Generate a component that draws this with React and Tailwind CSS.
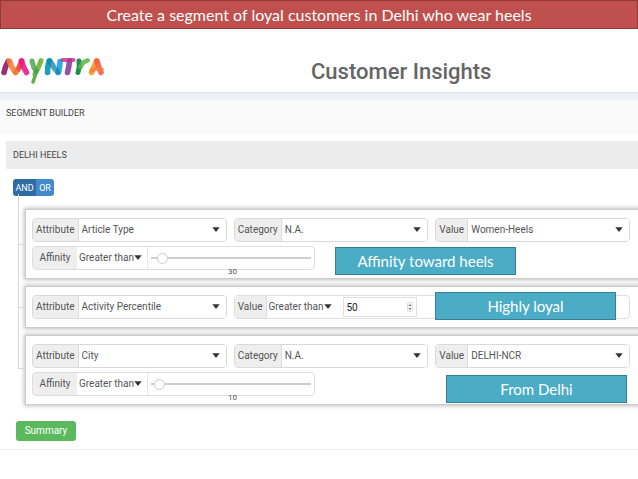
import { useState } from 'react'

function Logo() {
  return (
    <svg viewBox="0 0 106 32" className="w-[106px] h-8 shrink-0" role="img" aria-label="Myntra">
      <g fill="none" strokeLinecap="round" strokeWidth="5.600">
        <path d="M4 18.500 Q5 13 8 7.500" stroke="#9c2f72" />
        <path d="M15.500 18 Q20 14 21.500 7" stroke="#f0503f" />
        <path d="M9.500 7 Q11 13 15.500 18.500" stroke="#f58233" opacity=".88" />
        <path d="M21.500 7 Q23 13 26.500 18.500" stroke="#e8168b" opacity=".88" />
        <path d="M41 6.500 Q38.500 14 35 20" stroke="#7dbb42" strokeWidth="5" />
        <path d="M36 18 Q35 23 33 28" stroke="#5fb048" strokeWidth="3.500" />
        <path d="M32 7 Q33 13 36 17" stroke="#3fa04c" strokeWidth="5" opacity=".8" />
        <path d="M47.500 18.500 Q47.500 12 49 7" stroke="#1aa0b8" />
        <path d="M60 7.500 Q60 13 58.500 18.500" stroke="#29b0e8" />
        <path d="M50 7 Q53 13 57.500 18" stroke="#147fae" opacity=".75" />
        <path d="M69.500 7 Q69 13 67.500 18.500" stroke="#9a4fa8" />
        <path d="M62.500 6 H73.500" stroke="#c02c94" strokeWidth="4.200" opacity=".8" />
        <path d="M79 7 Q80 13 78 18.500" stroke="#1f8d4d" strokeWidth="5" />
        <path d="M80.500 13 Q82 8 87.500 6.500" stroke="#62b246" strokeWidth="4.800" opacity=".85" />
        <path d="M91.500 18.500 Q94 13 96.500 7" stroke="#fba23a" />
        <path d="M97 7 Q98.500 13 101 18.500" stroke="#ef5b42" opacity=".85" />
        <path d="M91.500 16.500 Q96 14 102 15.500" stroke="#f47a35" strokeWidth="3.800" opacity=".75" />
      </g>
    </svg>
  )
}

function Caret({ className }) {
  return (
    <svg viewBox="0 0 8 5" className={`pointer-events-none absolute top-1/2 -mt-[3px] w-2 h-[5px] ${className}`}>
      <path d="M0.300 0.200 H7.700 L4 5 Z" fill="#333" />
    </svg>
  )
}

function FieldLabel({ htmlFor, children }) {
  return (
    <label
      htmlFor={htmlFor}
      className="flex items-center shrink-0 px-[3px] bg-[#eeeeee] border-r border-[#dcdcdc]"
    >
      {children}
    </label>
  )
}

function SelectField({ id, label, value }) {
  return (
    <div className="flex h-6 border border-[#d9d9d9] rounded-sm overflow-hidden">
      <FieldLabel htmlFor={id}>{label}</FieldLabel>
      <div className="relative grow">
        <select id={id} className="appearance-none w-full h-full pl-[3px] pr-5 bg-white outline-none">
          <option>{value}</option>
        </select>
        <Caret className="right-[6px]" />
      </div>
    </div>
  )
}

function OperatorSelect({ id }) {
  return (
    <div className="relative w-[70px] shrink-0">
      <select
        id={id}
        aria-label="Operator"
        className="appearance-none w-full h-full pl-[2px] bg-white outline-none"
      >
        <option>Greater than</option>
        <option>Less than</option>
      </select>
      <Caret className="right-[5px]" />
    </div>
  )
}

function AffinityField({ id, amount, position }) {
  const [pos, setPos] = useState(position)

  return (
    <div className="relative flex w-[283px] h-6 border border-[#dedede] rounded-sm">
      <label
        htmlFor={id}
        className="flex items-center justify-center shrink-0 w-11 bg-[#eeeeee] rounded-l-sm"
      >
        Affinity
      </label>
      <OperatorSelect id={`${id}-operator`} />
      <div className="flex items-center grow px-[3px] border-l border-[#e8e8e8]">
        <input
          id={id}
          type="range"
          min="0"
          max="100"
          value={pos}
          onChange={(e) => setPos(e.target.value)}
          className="appearance-none w-full h-3 bg-transparent [&::-webkit-slider-runnable-track]:h-[2px] [&::-webkit-slider-runnable-track]:bg-[#cfcfcf] [&::-webkit-slider-thumb]:appearance-none [&::-webkit-slider-thumb]:-mt-1 [&::-webkit-slider-thumb]:size-[11px] [&::-webkit-slider-thumb]:rounded-full [&::-webkit-slider-thumb]:border [&::-webkit-slider-thumb]:border-[#cccccc] [&::-webkit-slider-thumb]:bg-white"
        />
      </div>
      <output htmlFor={id} className="absolute top-5 right-[77px] text-[8px] leading-[10px]">
        {amount}
      </output>
    </div>
  )
}

function NumberField({ id, label, value }) {
  return (
    <div className="col-span-2 flex h-6 border border-[#dedede] rounded-sm">
      <FieldLabel htmlFor={id}>{label}</FieldLabel>
      <OperatorSelect id={`${id}-operator`} />
      <div className="relative ml-[6px] my-px w-[74px]">
        <input
          id={id}
          type="number"
          defaultValue={value}
          className="w-full h-full pl-[3px] border border-[#e0e0e0] text-[#222] outline-none [&::-webkit-inner-spin-button]:appearance-none"
        />
        <svg viewBox="0 0 6 10" className="pointer-events-none absolute right-1 top-[5px] w-[6px] h-[10px]">
          <rect x="0.500" y="0.500" width="5" height="9" rx="1" fill="#f5f5f5" stroke="#dddddd" />
          <path d="M1.500 4 L3 2 L4.500 4 Z M1.500 6 L3 8 L4.500 6 Z" fill="#777" />
        </svg>
      </div>
    </div>
  )
}

// A rule card, joined to the tree line on its left
function RuleCard({ last, children }) {
  return (
    <div className="relative ml-[7px] -mr-1 py-2 pl-[6px] pr-[11px] bg-white border border-[#cccccc] shadow-[0_0_4px_1px_rgba(0,0,0,0.25)]">
      {!last && <span className="absolute -left-2 -top-4 -bottom-2 w-px bg-[#d8d8d8]" />}
      {last && <span className="absolute -left-2 -top-4 h-12 w-px bg-[#d8d8d8]" />}
      <span className={`absolute -left-2 w-[7px] h-px bg-[#d8d8d8] ${last ? 'top-8' : 'top-1/2'}`} />
      {children}
    </div>
  )
}

function Callout({ className, children }) {
  return (
    <div
      className={`absolute flex items-center justify-center w-[181px] h-7 bg-[#4bacc6] border border-[#397f93] font-[Lato,sans-serif] text-[15px] text-white ${className}`}
    >
      {children}
    </div>
  )
}

export default function App() {
  return (
    <div className="min-h-screen bg-white font-[Roboto,sans-serif] text-[10px] leading-4 text-[#555] overflow-x-hidden">
      <h1 className="flex items-center justify-center h-[29px] bg-[#c0504d] border border-[#8f3a38] font-[Lato,sans-serif] text-base text-white">
        Create a segment of loyal customers in Delhi who wear heels
      </h1>

      <header className="flex h-16 pt-[25px] border-b border-[#dfe0e8]">
        <Logo />
        <h2 className="pl-[205px] pt-2 text-[22px] leading-5 font-medium text-[#666]">
          Customer Insights
        </h2>
      </header>
      <div className="h-[7px] bg-[#eff0f6]" />

      <h3 className="h-[34px] pt-[5px] pl-[6px] bg-[#fafafa] text-[9px] text-[#444]">SEGMENT BUILDER</h3>

      <main>
        <h4 className="flex items-center mt-[7px] ml-[6px] h-7 pl-[7px] bg-[#ececec] text-[9px] text-[#444]">
          DELHI HEELS
        </h4>

        <div className="mt-[10px] ml-[13px] flex w-[41px] h-[17px] rounded-[3px] overflow-hidden text-[9px] text-white">
          <button className="w-[23px] bg-[#2e6da4]">AND</button>
          <button className="grow bg-[#428bca]">OR</button>
        </div>

        <div className="ml-[18px] mt-[13px] flex flex-col gap-[7px]">
          <RuleCard>
            <div className="grid grid-cols-3 gap-[7px]">
              <SelectField id="article" label="Attribute" value="Article Type" />
              <SelectField id="article-category" label="Category" value="N.A." />
              <SelectField id="article-value" label="Value" value="Women-Heels" />
            </div>
            <div className="mt-1">
              <AffinityField id="article-affinity" amount={30} position={4} />
            </div>
            <Callout className="right-[125px] top-[37px]">Affinity toward heels</Callout>
          </RuleCard>

          <RuleCard>
            <div className="grid grid-cols-3 gap-[7px]">
              <SelectField id="activity" label="Attribute" value="Activity Percentile" />
              <NumberField id="activity-value" label="Value" value={50} />
            </div>
            <Callout className="right-[25px] top-[5px]">Highly loyal</Callout>
          </RuleCard>

          <RuleCard last>
            <div className="grid grid-cols-3 gap-[7px]">
              <SelectField id="city" label="Attribute" value="City" />
              <SelectField id="city-category" label="Category" value="N.A." />
              <SelectField id="city-value" label="Value" value="DELHI-NCR" />
            </div>
            <div className="mt-1">
              <AffinityField id="city-affinity" amount={10} position={2} />
            </div>
            <Callout className="right-[14px] top-[39px]">From Delhi</Callout>
          </RuleCard>
        </div>

        <div className="pt-4 pb-2 pl-4 border-b border-[#eeeeee]">
          <button className="block w-[60px] h-5 rounded-[3px] bg-[#5cb85c] text-white">Summary</button>
        </div>
      </main>
    </div>
  )
}
